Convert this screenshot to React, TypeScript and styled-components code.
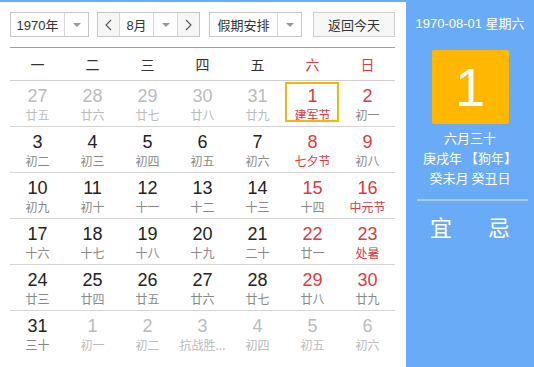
import React from "react";
import styled, { createGlobalStyle } from "styled-components";

const Global = createGlobalStyle`
  html, body { margin: 0; padding: 0; background: #fff; }
  body { font-family: "Liberation Sans", Arial, "Noto Sans CJK SC", sans-serif; }
`;

const BLUE = "#6aabf7";
const RED = "#e0383e";

const Wrapper = styled.div`
  width: 534px;
  height: 367px;
  box-sizing: border-box;
  border-top: 2px solid ${BLUE};
  display: flex;
  overflow: hidden;
`;

const Main = styled.div`
  width: 406px;
  box-sizing: border-box;
  padding: 10px 11px 0 10px;
`;

const Toolbar = styled.div`
  display: flex;
  height: 25px;
  align-items: stretch;
`;

const SelectBox = styled.div<{ $w: number; $ml?: number }>`
  width: ${(p) => p.$w}px;
  margin-left: ${(p) => p.$ml ?? 0}px;
  box-sizing: border-box;
  border: 1px solid #c6c6c6;
  background: #fff;
  display: flex;
  font-family: "Liberation Sans", Arial, "Noto Sans CJK SC", sans-serif;
  font-size: 13px;
  color: #333;
`;

const SelectLabel = styled.div<{ $cjk?: boolean }>`
  flex: 1;
  display: flex;
  align-items: center;
  justify-content: center;
  ${(p) => (p.$cjk ? 'font-family: "Noto Sans CJK SC", sans-serif;' : "")}
`;

const Arrow = styled.div`
  width: 23px;
  border-left: 1px solid #d6d6d6;
  display: flex;
  align-items: center;
  justify-content: center;
  &::after {
    content: "";
    border-left: 4px solid transparent;
    border-right: 4px solid transparent;
    border-top: 4px solid #999;
  }
`;

const NavBtn = styled.div<{ $side: "l" | "r" }>`
  width: 21px;
  background: #f6f6f6;
  display: flex;
  align-items: center;
  justify-content: center;
  ${(p) => (p.$side === "l" ? "border-right: 1px solid #d6d6d6;" : "border-left: 1px solid #d6d6d6;")}
`;

const TodayBtn = styled.div`
  width: 82px;
  margin-left: 11px;
  box-sizing: border-box;
  border: 1px solid #d0d0d0;
  background: #f7f7f7;
  display: flex;
  align-items: center;
  justify-content: center;
  font-size: 13px;
  color: #333;
  font-family: "Noto Sans CJK SC", sans-serif;
`;

const BlueLine = styled.div`
  height: 1px;
  background: ${BLUE};
  margin-top: 10px;
`;

const WeekHeader = styled.div`
  display: grid;
  grid-template-columns: repeat(7, 55px);
  height: 32px;
  border-bottom: 1px solid #d0d0d0;
`;

const WeekDay = styled.div<{ $red?: boolean }>`
  display: flex;
  align-items: center;
  justify-content: center;
  font-family: "Noto Sans CJK SC", sans-serif;
  font-size: 14px;
  color: ${(p) => (p.$red ? RED : "#333")};
`;

const Row = styled.div<{ $last?: boolean }>`
  display: grid;
  grid-template-columns: repeat(7, 55px);
  height: 45px;
  border-bottom: 1px solid ${(p) => (p.$last ? "transparent" : "#d4d4d4")};
`;

const Cell = styled.div<{ $sel?: boolean }>`
  position: relative;
  display: flex;
  flex-direction: column;
  align-items: center;
  padding-top: 4px;
  &::before {
    content: "";
    display: ${(p) => (p.$sel ? "block" : "none")};
    position: absolute;
    left: 0;
    top: 1px;
    width: 54px;
    height: 40px;
    box-sizing: border-box;
    border: 2px solid #f5b40f;
  }
`;

const Num = styled.div<{ $c: string }>`
  font-family: "Liberation Sans", Arial, sans-serif;
  font-size: 18px;
  line-height: 22px;
  color: ${(p) => p.$c};
`;

const Lunar = styled.div<{ $c: string }>`
  font-family: "Noto Sans CJK SC", sans-serif;
  font-size: 12px;
  line-height: 16px;
  color: ${(p) => p.$c};
  white-space: nowrap;
`;

const Side = styled.div`
  width: 128px;
  background: ${BLUE};
  display: flex;
  flex-direction: column;
  align-items: center;
  color: #fff;
`;

const SideDate = styled.div`
  margin-top: 13px;
  font-size: 13px;
  line-height: 18px;
  font-family: "Liberation Sans", Arial, "Noto Sans CJK SC", sans-serif;
`;

const BigDay = styled.div`
  margin-top: 17px;
  width: 77px;
  height: 74px;
  background: #ffb700;
  border-radius: 2px;
  display: flex;
  align-items: center;
  justify-content: center;
  font-family: "Liberation Sans", Arial, sans-serif;
  font-size: 54px;
  font-weight: 300;
`;

const LunarInfo = styled.div`
  margin-top: 4px;
  font-family: "Noto Sans CJK SC", sans-serif;
  font-size: 13px;
  line-height: 20px;
  text-align: center;
`;

const Divider = styled.div`
  width: 111px;
  margin-left: 5px;
  height: 2px;
  background: rgba(255, 255, 255, 0.4);
  margin-top: 11px;
`;

const YiJi = styled.div`
  margin-top: 10px;
  display: flex;
  gap: 36px;
  font-family: "Noto Sans CJK SC", sans-serif;
  font-size: 22px;
  line-height: 30px;
`;

type D = { n: number; l: string; t: "o" | "n" | "w"; f?: boolean; sel?: boolean };

const rows: D[][] = [
  [
    { n: 27, l: "廿五", t: "o" },
    { n: 28, l: "廿六", t: "o" },
    { n: 29, l: "廿七", t: "o" },
    { n: 30, l: "廿八", t: "o" },
    { n: 31, l: "廿九", t: "o" },
    { n: 1, l: "建军节", t: "w", f: true, sel: true },
    { n: 2, l: "初一", t: "w" },
  ],
  [
    { n: 3, l: "初二", t: "n" },
    { n: 4, l: "初三", t: "n" },
    { n: 5, l: "初四", t: "n" },
    { n: 6, l: "初五", t: "n" },
    { n: 7, l: "初六", t: "n" },
    { n: 8, l: "七夕节", t: "w", f: true },
    { n: 9, l: "初八", t: "w" },
  ],
  [
    { n: 10, l: "初九", t: "n" },
    { n: 11, l: "初十", t: "n" },
    { n: 12, l: "十一", t: "n" },
    { n: 13, l: "十二", t: "n" },
    { n: 14, l: "十三", t: "n" },
    { n: 15, l: "十四", t: "w" },
    { n: 16, l: "中元节", t: "w", f: true },
  ],
  [
    { n: 17, l: "十六", t: "n" },
    { n: 18, l: "十七", t: "n" },
    { n: 19, l: "十八", t: "n" },
    { n: 20, l: "十九", t: "n" },
    { n: 21, l: "二十", t: "n" },
    { n: 22, l: "廿一", t: "w" },
    { n: 23, l: "处暑", t: "w", f: true },
  ],
  [
    { n: 24, l: "廿三", t: "n" },
    { n: 25, l: "廿四", t: "n" },
    { n: 26, l: "廿五", t: "n" },
    { n: 27, l: "廿六", t: "n" },
    { n: 28, l: "廿七", t: "n" },
    { n: 29, l: "廿八", t: "w" },
    { n: 30, l: "廿九", t: "w" },
  ],
  [
    { n: 31, l: "三十", t: "n" },
    { n: 1, l: "初一", t: "o" },
    { n: 2, l: "初二", t: "o" },
    { n: 3, l: "抗战胜...", t: "o" },
    { n: 4, l: "初四", t: "o" },
    { n: 5, l: "初五", t: "o" },
    { n: 6, l: "初六", t: "o" },
  ],
];

const numColor = (d: D) => (d.t === "o" ? "#bbbbbb" : d.t === "w" ? RED : "#222");
const lunarColor = (d: D) => (d.t === "o" ? "#bbbbbb" : d.f ? RED : "#888");

const Chevron = ({ dir }: { dir: "l" | "r" }) => (
  <svg width="7" height="12" viewBox="0 0 7 12">
    <path
      d={dir === "l" ? "M6 1 L1 6 L6 11" : "M1 1 L6 6 L1 11"}
      fill="none"
      stroke="#555"
      strokeWidth="1.1"
    />
  </svg>
);

export default function App() {
  return (
    <>
      <Global />
      <Wrapper>
        <Main>
          <Toolbar>
            <SelectBox $w={79}>
              <SelectLabel>1970年</SelectLabel>
              <Arrow />
            </SelectBox>
            <SelectBox $w={103} $ml={8}>
              <NavBtn $side="l">
                <Chevron dir="l" />
              </NavBtn>
              <SelectLabel>8月</SelectLabel>
              <Arrow />
              <NavBtn $side="r">
                <Chevron dir="r" />
              </NavBtn>
            </SelectBox>
            <SelectBox $w={93} $ml={9}>
              <SelectLabel $cjk>假期安排</SelectLabel>
              <Arrow />
            </SelectBox>
            <TodayBtn>返回今天</TodayBtn>
          </Toolbar>
          <BlueLine />
          <WeekHeader>
            {["一", "二", "三", "四", "五", "六", "日"].map((w, i) => (
              <WeekDay key={w} $red={i >= 5}>
                {w}
              </WeekDay>
            ))}
          </WeekHeader>
          {rows.map((r, ri) => (
            <Row key={ri} $last={ri === rows.length - 1}>
              {r.map((d, ci) => (
                <Cell key={ci} $sel={d.sel}>
                  <Num $c={numColor(d)}>{d.n}</Num>
                  <Lunar $c={lunarColor(d)}>{d.l}</Lunar>
                </Cell>
              ))}
            </Row>
          ))}
        </Main>
        <Side>
          <SideDate>1970-08-01 星期六</SideDate>
          <BigDay>1</BigDay>
          <LunarInfo>
            六月三十
            <br />
            庚戌年 【狗年】
            <br />
            癸未月 癸丑日
          </LunarInfo>
          <Divider />
          <YiJi>
            <span>宜</span>
            <span>忌</span>
          </YiJi>
        </Side>
      </Wrapper>
    </>
  );
}
